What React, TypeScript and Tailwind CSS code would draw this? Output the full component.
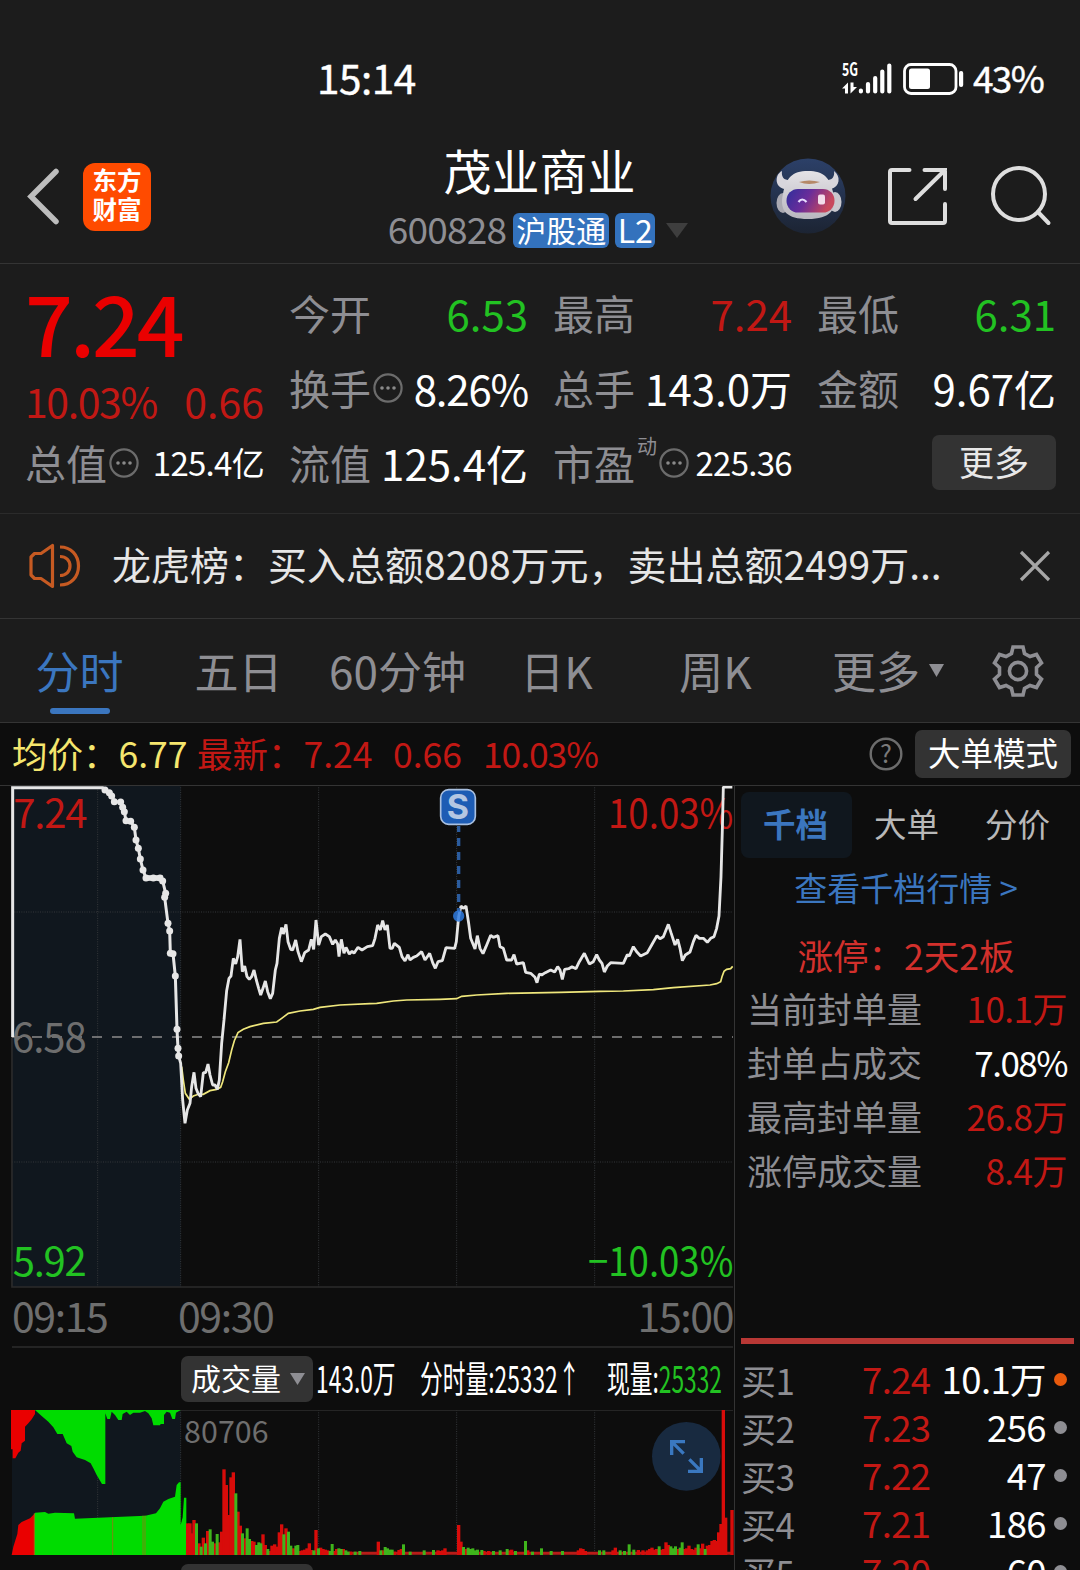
import { clsx } from 'clsx'
import type { ReactNode } from 'react'

type Tone = 'up' | 'down' | 'plain'

const toneClass: Record<Tone, string> = {
  up: 'text-[#c21814]',
  down: 'text-[#22c222]',
  plain: 'text-white',
}

const TABS = ['分时', '五日', '60分钟', '日K', '周K']

const LIMIT_ROWS: { label: string; value: string; tone: Tone }[] = [
  { label: '当前封单量', value: '10.1万', tone: 'up' },
  { label: '封单占成交', value: '7.08%', tone: 'plain' },
  { label: '最高封单量', value: '26.8万', tone: 'up' },
  { label: '涨停成交量', value: '8.4万', tone: 'up' },
]

const BIDS = [
  { label: '买1', price: '7.24', qty: '10.1万', hot: true },
  { label: '买2', price: '7.23', qty: '256' },
  { label: '买3', price: '7.22', qty: '47' },
  { label: '买4', price: '7.21', qty: '186' },
  { label: '买5', price: '7.20', qty: '60' },
]

// Chart units are thirds of a pixel
const AUCTION =
  '315,30 328,38 335,48 343,65 362,66 368,82 373,95 378,122 392,124 403,142 408,180 415,205 421,237 429,270 438,294 460,294 480,294 488,303 497,340 494,352 504,430 509,453 511,520 519,521 526,588 531,748 534,805 536,828'

const PRICE =
  '536,828 542,850 548,960 555,1030 562,990 570,970 575,920 582,877 588,925 594,940 602,950 610,878 617,878 624,852 630,885 638,915 645,915 652,928 658,900 665,790 672,720 680,632 687,595 693,588 700,535 707,552 713,530 720,478 727,575 734,558 741,590 748,598 755,590 762,570 769,600 776,625 782,645 789,625 796,603 803,635 811,656 818,640 826,570 831,550 838,475 845,443 850,462 858,433 864,485 872,508 878,510 887,480 894,515 904,545 914,518 926,510 934,478 941,508 948,420 956,495 964,470 976,462 988,470 998,493 1006,480 1013,492 1017,530 1024,478 1032,520 1038,502 1048,522 1056,514 1062,520 1074,502 1086,510 1102,500 1118,497 1125,475 1133,435 1141,450 1148,422 1155,450 1162,435 1170,505 1177,505 1183,490 1198,502 1206,530 1215,543 1224,524 1230,540 1240,532 1250,528 1265,515 1275,540 1289,520 1298,548 1306,565 1314,545 1327,542 1338,503 1364,505 1369,485 1376,410 1383,378 1390,385 1398,378 1406,430 1412,475 1425,507 1432,467 1440,505 1449,521 1458,500 1472,466 1480,472 1494,467 1500,500 1510,505 1520,540 1535,540 1542,524 1550,552 1570,548 1577,577 1592,580 1605,592 1611,608 1618,582 1625,585 1636,578 1652,570 1664,576 1673,560 1680,570 1687,598 1694,568 1706,566 1716,560 1728,566 1738,545 1753,520 1768,552 1780,545 1790,524 1798,540 1806,550 1813,576 1822,558 1832,548 1870,550 1882,524 1888,528 1900,500 1910,515 1922,528 1942,518 1955,495 1971,467 1980,476 1990,470 2005,433 2013,458 2025,495 2033,478 2040,505 2047,542 2056,525 2070,516 2080,485 2088,466 2098,475 2110,475 2122,487 2132,475 2142,470 2150,445 2157,408 2163,290 2167,150 2170,21 2197,21'

const AVERAGE =
  '545,860 550,900 556,940 568,958 580,948 595,943 610,943 630,932 650,928 662,922 668,905 676,875 686,848 695,810 703,782 714,758 730,748 750,740 790,730 830,726 845,715 865,700 900,693 940,688 960,682 1020,675 1110,671 1130,670 1180,663 1220,660 1320,658 1370,656 1385,649 1430,645 1520,640 1680,637 1800,634 1870,633 1960,629 2020,623 2130,615 2150,611 2162,605 2166,590 2172,574 2180,568 2192,566 2198,559'

// x, height; listed per colour
const RED_BARS =
  '563,95 570,95 575,65 582,105 597,35 610,52 623,72 645,35 659,38 665,70 672,257 679,210 686,120 693,233 700,248 714,130 721,88 735,50 755,42 762,40 789,62 796,30 809,12 816,28 824,32 831,25 838,68 845,92 858,80 880,20 900,12 907,14 914,16 921,20 928,35 934,15 948,75 962,22 969,18 976,16 983,14 1003,12 1010,18 1030,18 1051,10 1135,40 1149,14 1183,10 1197,15 1204,18 1314,14 1321,12 1328,14 1335,20 1376,90 1383,40 1397,18 1452,12 1466,12 1528,14 1535,16 1583,14 1735,14 1742,20 1749,18 1756,12 1839,14 1846,22 1915,15 1929,14 1942,14 1949,18 1956,22 1963,16 1970,18 1984,16 1991,18 1998,38 2005,30 2033,18 2053,18 2060,20 2067,28 2074,18 2081,16 2088,22 2101,20 2108,34 2122,28 2129,30 2136,42 2143,45 2150,42 2156,68 2163,93 2170,435 2177,112 2196,135'

const GREEN_BARS =
  '589,95 603,25 616,35 630,77 637,40 651,63 707,185 727,65 741,80 748,48 769,30 776,38 782,35 803,18 851,62 865,70 872,28 887,28 893,30 941,14 955,20 990,12 996,33 1016,20 1023,18 1037,14 1044,10 1065,10 1079,12 1142,14 1155,24 1162,20 1169,16 1176,16 1210,32 1230,10 1272,14 1300,15 1390,24 1404,22 1411,18 1418,20 1425,14 1432,16 1445,15 1480,12 1500,14 1521,18 1546,12 1576,42 1597,10 1624,20 1653,12 1687,12 1798,14 1811,14 1860,14 1873,12 1887,32 1901,16 1977,26 2012,26 2019,20 2026,26 2040,22 2046,38 2094,32 2115,18'

const parse = (s: string) => s.split(' ').map((p) => p.split(',').map(Number))

function Dots() {
  return (
    <svg width="30" height="30" viewBox="0 0 30 30" fill="none" className="ml-[2px] shrink-0">
      <circle cx="15" cy="15" r="13.6" stroke="#6c6c6c" strokeWidth="2.2" />
      <circle cx="9" cy="15" r="1.8" fill="#8a8a8a" />
      <circle cx="15" cy="15" r="1.8" fill="#8a8a8a" />
      <circle cx="21" cy="15" r="1.8" fill="#8a8a8a" />
    </svg>
  )
}

function StatusBar() {
  return (
    <div className="flex h-[138px] items-start pt-[53px] leading-[48px] text-white">
      <span className="ml-[317px] w-[525px] text-[40.5px] tracking-[-0.5px] [-webkit-text-stroke:0.4px_white]">15:14</span>
      <svg width="122" height="34" viewBox="0 0 122 34" className="mt-[9px] overflow-visible">
        <text x="0" y="14" fill="#fff" fontSize="18" fontWeight="700" textLength="16" lengthAdjust="spacingAndGlyphs">
          5G
        </text>
        <path d="M0 26.500L6 20.500V31.500H3V26.500Z M8.500 20.500H11.500V25L15 25L8.500 31.500Z" fill="#fff" />
        <path
          d="M18.900 28.500V29.500M26 22V29.500M33.200 16V29.500M40.300 9.500V29.500M47.300 3.500V29.500"
          stroke="#fff"
          strokeWidth="4.200"
          strokeLinecap="round"
        />
        <rect x="62.500" y="2.500" width="51.500" height="29" rx="6.500" fill="none" stroke="#fff" strokeWidth="2.800" />
        <rect x="67" y="6.500" width="21" height="20.500" rx="2.500" fill="#fff" />
        <rect x="117" y="9" width="4.200" height="16" rx="2" fill="#fff" />
      </svg>
      <span className="ml-[9px] text-[37px] tracking-[-1.7px] [-webkit-text-stroke:0.4px_white]">43%</span>
    </div>
  )
}

function Robot() {
  return (
    <svg width="76" height="76" viewBox="0 0 76 76">
      <defs>
        <linearGradient id="sky" x1="0" y1="0" x2="0" y2="1">
          <stop offset="0" stopColor="#2c4068" />
          <stop offset="1" stopColor="#1c2433" />
        </linearGradient>
        <linearGradient id="visor" x1="0" y1="0" x2="1" y2="0.300">
          <stop offset="0" stopColor="#2f2f9c" />
          <stop offset="0.500" stopColor="#6a2c9a" />
          <stop offset="1" stopColor="#c8485c" />
        </linearGradient>
        <linearGradient id="shell" x1="0" y1="0" x2="0" y2="1">
          <stop offset="0" stopColor="#e4e2e6" />
          <stop offset="1" stopColor="#b9b7bf" />
        </linearGradient>
      </defs>
      <circle cx="38" cy="38" r="37.500" fill="url(#sky)" />
      <path d="M12 13 C4 17 5 30 15 31 L22 22 C15 23 11 20 12 13Z" fill="#d8d6dc" />
      <path d="M64 13 C71 18 70 29 61 31 L54 22 C61 23 65 20 64 13Z" fill="#d8d6dc" />
      <ellipse cx="13" cy="45" rx="6.500" ry="10" fill="#aaa9b2" />
      <ellipse cx="65" cy="44" rx="6.500" ry="10" fill="#c9c8ce" />
      <path d="M38 13 C54 13 60 20 63 34 C68 52 60 61 38 61 C17 61 9 53 13 36 C16 20 22 13 38 13Z" fill="url(#shell)" />
      <path d="M29 24 Q39 21 50 24 Q39 28 29 24Z" fill="#b58868" />
      <rect x="16.500" y="31" width="48" height="23.500" rx="11.500" fill="url(#visor)" />
      <path d="M28.500 44 Q32 39 36.500 44" stroke="#e8dcff" strokeWidth="2.200" fill="none" />
      <rect x="48" y="36.500" width="7" height="10" rx="2" fill="#f3dcea" />
    </svg>
  )
}

function Header() {
  return (
    <header className="flex h-[126px] border-b border-[#343434]">
      <div className="flex w-[386px] items-start pt-[25px]">
        <svg width="36" height="66" viewBox="0 0 36 66" className="ml-[25px]" fill="none">
          <path d="M31 8.500 L6 33.500 L31 58.500" stroke="#bdbdbd" strokeWidth="5.500" strokeLinecap="round" />
        </svg>
        <div className="ml-[22px] h-[68px] w-[68px] rounded-[12px] bg-[#ff4b00] pt-[2px] text-center text-[24.5px] leading-[29px] font-bold text-white">
          东方
          <br />
          财富
        </div>
      </div>
      <div className="flex w-[304px] flex-col items-center">
        <h1 className="mt-[7px] ml-[3px] text-[48px] leading-[48px] text-white">茂业商业</h1>
        <div className="mt-[20px] flex h-[35px] items-center">
          <span className="pb-[5px] text-[37px] leading-[30px] tracking-[-0.8px] text-[#8e8e93]">600828</span>
          <span className="ml-[7px] flex h-[35px] w-[96px] items-center justify-center rounded-[6px] bg-[#3372bd] pb-[3px] text-[30px] leading-none text-white">
            沪股通
          </span>
          <span className="ml-[6px] flex h-[35px] w-[40px] items-center justify-center rounded-[6px] bg-[#3372bd] pb-[4px] text-[32px] leading-none text-white">
            L2
          </span>
          <svg width="22" height="15" viewBox="0 0 22 15" className="ml-[11px]">
            <path d="M0 0H22L11 15Z" fill="#3e3e3e" />
          </svg>
        </div>
      </div>
      <div className="ml-[80px] flex items-start pt-[20px]">
        <Robot />
        <svg width="62" height="62" viewBox="0 0 62 62" className="mt-[8px] ml-[40px]" fill="none" stroke="#dedede" strokeWidth="4" strokeLinecap="round">
          <path d="M23.500 4H6Q4 4 4 6V55Q4 57 6 57H57Q59 57 59 55V38" />
          <path d="M38.500 4H59V23M59 4L29.500 33" />
        </svg>
        <svg width="64" height="64" viewBox="0 0 64 64" className="mt-[6px] ml-[40px]" fill="none" stroke="#dedede" strokeWidth="4" strokeLinecap="round">
          <circle cx="31" cy="30" r="26" />
          <path d="M50 48L60.500 59" />
        </svg>
      </div>
    </header>
  )
}

interface StatProps {
  label: string
  value: string
  tone?: Tone
  small?: boolean
  mark?: ReactNode
}

function Stat({ label, value, tone = 'plain', small, mark }: StatProps) {
  return (
    <div className="flex h-[75px] items-center pb-[2px] leading-none whitespace-nowrap">
      <span className="text-[41px] text-[#8e8e93]">{label}</span>
      {mark}
      <span
        className={clsx(
          'ml-auto',
          small ? 'text-[33px] tracking-[-0.7px]' : 'text-[42px]',
          value.endsWith('%') && 'tracking-[-1.2px]',
          toneClass[tone],
        )}
      >
        {value}
      </span>
    </div>
  )
}

function Quote() {
  return (
    <section className="flex h-[250px] gap-[25px] border-b border-[#2b2b2b] pt-[12px] pl-[25px]">
      <div className="w-[239px]">
        <div className="h-[94px] pt-[3px] text-[84px] leading-[84px] font-medium tracking-[-3px] text-[#ea0000]">7.24</div>
        <div className="flex h-[56px] justify-between pt-[10px] text-[41px] leading-[41px] text-[#c21814]">
          <span className="tracking-[-1.4px]">10.03%</span>
          <span>0.66</span>
        </div>
        <Stat label="总值" value="125.4亿" small mark={<Dots />} />
      </div>
      <div className="w-[239px]">
        <Stat label="今开" value="6.53" tone="down" />
        <Stat label="换手" value="8.26%" mark={<Dots />} />
        <Stat label="流值" value="125.4亿" />
      </div>
      <div className="w-[239px]">
        <Stat label="最高" value="7.24" tone="up" />
        <Stat label="总手" value="143.0万" />
        <Stat
          label="市盈"
          value="225.36"
          small
          mark={
            <>
              <span className="mb-[34px] ml-[2px] text-[20px] text-[#8e8e93]">动</span>
              <Dots />
            </>
          }
        />
      </div>
      <div className="w-[239px]">
        <Stat label="最低" value="6.31" tone="down" />
        <Stat label="金额" value="9.67亿" />
        <div className="ml-auto mt-[9px] flex h-[55px] w-[124px] items-center justify-center rounded-[7px] bg-[#333333] pb-[5px] text-[35px] leading-none text-[#e8e8e8]">
          更多
        </div>
      </div>
    </section>
  )
}

function Notice() {
  return (
    <section className="flex h-[105px] items-center border-b border-[#343434] pl-[28px]">
      <svg width="54" height="46" viewBox="0 0 54 46" fill="none" stroke="#c65a22" strokeWidth="3.200">
        <path d="M24.500 2.500V43.500L13 35.500H6.500L3 32V14L6.500 10.500H13Z" strokeLinejoin="round" />
        <path d="M32 13.500C38 13.500 42 17.500 42 23S38 32.500 32 32.500M32 4C43 4 50.500 12 50.500 23S43 42 32 42" />
      </svg>
      <p className="ml-[30px] w-[890px] pb-[5px] text-[39px] leading-none whitespace-nowrap text-[#e6e6e6]">
        龙虎榜：买入总额8208万元，卖出总额2499万...
      </p>
      <svg width="32" height="32" viewBox="0 0 32 32" stroke="#a6a6a6" strokeWidth="3.200" className="ml-[17px]">
        <path d="M2 2L30 30M30 2L2 30" />
      </svg>
    </section>
  )
}

function TabBar() {
  return (
    <nav className="flex h-[104px] border-b border-[#343434] text-[44px] leading-[44px] text-[#8e8e93]">
      {TABS.map((tab, i) => (
        <div key={tab} className={clsx('flex w-[159px] flex-col items-center pt-[29px]', i === 0 && 'text-[#3b76bf]')}>
          {tab}
          {i === 0 && <span className="mt-[16px] h-[6px] w-[60px] rounded-full bg-[#3b76bf]" />}
        </div>
      ))}
      <div className="flex w-[149px] items-start justify-end pt-[29px]">
        更多
        <svg width="15" height="13" viewBox="0 0 15 13" className="mt-[16px] ml-[9px]">
          <path d="M0 0H15L7.500 13Z" fill="#8e8e93" />
        </svg>
      </div>
      <svg width="54" height="54" viewBox="-27 -27 54 54" className="mt-[25px] ml-[47px]" fill="none" stroke="#8e8e93" strokeWidth="3.600">
        <circle r="8.600" />
        <path d="M-5 -24H5L6.500 -17.500L12 -14.500L18.500 -16.500L23.500 -8L18.500 -3.500V3.500L23.500 8L18.500 16.500L12 14.500L6.500 17.500L5 24H-5L-6.500 17.500L-12 14.500L-18.500 16.500L-23.500 8L-18.500 3.500V-3.500L-23.500 -8L-18.500 -16.500L-12 -14.500L-6.500 -17.500Z" />
      </svg>
    </nav>
  )
}

function InfoBar() {
  return (
    <div className="flex h-[63px] items-center border-b border-[#343434] pr-[9px] pl-[12px] text-[35.5px] leading-none whitespace-nowrap text-[#c21814]">
      <div className="flex pb-[3px]">
        <span className="w-[185px] text-[#f5e66e]">均价：6.77</span>
        <span className="w-[196px]">最新：7.24</span>
        <span className="w-[90px]">0.66</span>
        <span className="tracking-[-1.1px]">10.03%</span>
      </div>
      <svg width="34" height="34" viewBox="0 0 34 34" className="ml-auto overflow-visible">
        <circle cx="17" cy="17" r="15.300" fill="none" stroke="#6c6c6c" strokeWidth="2.400" />
        <text x="17" y="26" fontSize="25" textAnchor="middle" fill="#7a7a7a">
          ?
        </text>
      </svg>
      <span className="ml-[12px] flex h-[48px] w-[156px] items-center justify-center rounded-[7px] bg-[#333333] pb-[4px] text-[32.5px] text-white">
        大单模式
      </span>
    </div>
  )
}

function PriceChart() {
  return (
    <svg width="734" height="502" viewBox="0 18 2202 1506" className="block" fill="none">
      <rect x="36" y="15" width="506" height="1506" fill="#10171e" />
      <g stroke="#34373a" strokeWidth="3" strokeDasharray="3 4">
        <path d="M293 15V1521M542 15V1521M956 15V1521M1370 15V1521M1784 15V1521" />
        <path d="M36 396H2199M36 1146H2199" />
      </g>
      <path d="M36 15V1521H2199" stroke="#2b2b2b" strokeWidth="5" />
      <path d="M36 771H2199" stroke="#8c8c8c" strokeWidth="5" strokeDasharray="30 30" />
      <g fontSize="120">
        <text x="40" y="144" fill="#c21814" textLength="222">7.24</text>
        <text x="36" y="816" fill="#6e6e6e" textLength="224">6.58</text>
        <text x="38" y="1489" fill="#22c222" textLength="222">5.92</text>
        <text x="1824" y="144" fill="#c21814" textLength="376" lengthAdjust="spacingAndGlyphs">10.03%</text>
        <text x="1764" y="1489" fill="#22c222" textLength="436" lengthAdjust="spacingAndGlyphs">−10.03%</text>
      </g>
      <polyline points={AVERAGE} stroke="#efe77c" strokeWidth="5" />
      <path d="M38 771V23H308L315 30" stroke="#e6e6e6" strokeWidth="9" />
      <polyline points={AUCTION} stroke="#e6e6e6" strokeWidth="9" />
      {parse(AUCTION).map(([x, y]) => (
        <circle key={`${x}-${y}`} cx={x} cy={y} r="10.500" fill="#e6e6e6" />
      ))}
      <path d="M438 294H488" stroke="#e6e6e6" strokeWidth="17" />
      <polyline points={PRICE} stroke="#e6e6e6" strokeWidth="8.500" strokeLinejoin="bevel" />
      <path d="M1376 138V395" stroke="#2b5c9e" strokeWidth="10" strokeDasharray="24 18" strokeDashoffset="6" />
      <circle cx="1376" cy="408" r="17" fill="#2f7be0" fillOpacity="0.850" />
      <rect x="1322" y="29" width="104" height="104" rx="24" fill="#1d5cb4" stroke="#a9c0e0" strokeWidth="5" />
      <text x="1374" y="118" fontSize="102" fontWeight="700" textAnchor="middle" fill="#b4c6e2" className="font-['Inter']">
        S
      </text>
    </svg>
  )
}

function VolumeChart() {
  return (
    <svg width="734" height="146" viewBox="0 540 2202 438" className="block" fill="none">
      <rect x="36" y="540" width="506" height="435" fill="#10171e" />
      <g stroke="#34373a" strokeWidth="3" strokeDasharray="3 4">
        <path d="M293 540V975M542 540V975M956 540V975M1370 540V975M1784 540V975" />
      </g>
      <path d="M36 541H2199" stroke="#2b2b2b" strokeWidth="3" />
      <path d="M33 540H105V552L95 568L85 580L75 590V632L65 640L62 662L55 668L46 685H38V658H33Z" fill="#ea0000" />
      <path
        d="M105 540H542L528 548L525 567H517L510 548L500 545L492 555V582H482L480 586H460L455 565L445 550L435 543L420 548H400L390 555L380 545L368 552L365 570H355L345 555L335 545L330 567H322L316 550V762H306L290 735L280 715L272 700L255 690L230 682L218 665L214 648L200 640L188 612H172L160 592L145 575L125 558Z"
        fill="#00dc00"
      />
      <path d="M35 975L40 950L52 912L55 885L65 876L90 865L105 850V975Z" fill="#ea0000" />
      <path
        d="M105 848L135 846L145 851L165 848L222 850L225 866L330 862L436 857L468 850L480 835L490 815L505 807L525 800L530 765L537 757H542V885L548 862L552 803H559V975H105Z"
        fill="#00dc00"
      />
      <path d="M103 850V975M338 862V975M429 857V975M435 857V975" stroke="#7a8a10" strokeWidth="3" />
      <path d="M559 970H2199" stroke="#b81c18" strokeWidth="9" />
      {parse(RED_BARS).map(([x, h]) => (
        <rect key={x} x={x - 5} y={975 - h} width="10" height={h} fill="#d80c0a" />
      ))}
      {parse(GREEN_BARS).map(([x, h]) => (
        <rect key={x} x={x - 4} y={975 - h} width="9" height={h} fill="#3fb41c" />
      ))}
      <text x="552" y="638" fontSize="91" fill="#6e6e6e" textLength="254">
        80706
      </text>
      <circle cx="2059" cy="679" r="103" fill="#182a40" />
      <g stroke="#3a78c0" strokeWidth="10">
        <path d="M2015 675V635H2055M2015 635L2051 671" />
        <path d="M2104 684V724H2064M2104 724L2068 688" />
      </g>
    </svg>
  )
}

function Condensed({ className, children }: { className: string; children: ReactNode }) {
  return (
    <div className={className}>
      <span className="inline-block origin-left scale-x-[0.615] whitespace-nowrap">{children}</span>
    </div>
  )
}

function ChartColumn() {
  return (
    <div className="w-[735px] shrink-0 border-r border-[#343434]">
      <PriceChart />
      <div className="ml-[12px] flex h-[60px] w-[721px] border-b-2 border-[#242424] pt-[6px] text-[41px] leading-[41px] tracking-[-1.4px] text-[#6e6e6e]">
        <span className="w-[166px]">09:15</span>
        <span>09:30</span>
        <span className="ml-auto">15:00</span>
      </div>
      <div className="flex h-[62px] items-center pl-[181px] text-[37px] leading-none text-white">
        <span className="mr-[3px] flex h-[46px] w-[132px] items-center rounded-[7px] bg-[#333333] pb-[4px] pl-[10px] text-[30px]">
          成交量
          <svg width="15" height="12" viewBox="0 0 15 12" className="mt-[3px] ml-[9px]">
            <path d="M0 0H15L7.500 12Z" fill="#8e8e93" />
          </svg>
        </span>
        <Condensed className="w-[104px] pb-[4px]">143.0万</Condensed>
        <Condensed className="w-[187px] pb-[4px]">分时量:25332↑</Condensed>
        <Condensed className="w-[118px] pb-[4px]">
          现量:<span className="text-[#22c222]">25332</span>
        </Condensed>
      </div>
      <VolumeChart />
      <div className="mt-[8px] ml-[181px] h-[46px] w-[132px] rounded-[7px] bg-[#333333]" />
    </div>
  )
}

function OrderBook() {
  return (
    <aside className="flex-1 pl-[6px] leading-none whitespace-nowrap">
      <div className="mt-[6px] flex h-[66px] text-[32.5px] text-[#b8b8b8]">
        <span className="flex w-[111px] items-center justify-center rounded-[8px] bg-[#10171e] pr-[2px] pb-[3px] font-bold text-[#3b76bf]">千档</span>
        <span className="flex w-[111px] items-center justify-center pr-[2px] pb-[3px]">大单</span>
        <span className="flex w-[111px] items-center justify-center pr-[2px] pb-[3px]">分价</span>
      </div>
      <div className="mt-[13px] w-[330px] text-center text-[33px] text-[#3b76bf]">查看千档行情 &gt;</div>
      <div className="mt-[33px] w-[330px] text-center text-[35.5px] text-[#d2302c]">涨停：2天2板</div>
      <div className="mt-[9px] pr-[13px] pl-[6px] text-[35px]">
        {LIMIT_ROWS.map((row) => (
          <div key={row.label} className="flex h-[54px] items-center justify-between pb-[2px]">
            <span className="text-[#8e8e93]">{row.label}</span>
            <span className={clsx(row.value.endsWith('%') ? 'tracking-[-1.5px]' : 'tracking-[-0.5px]', toneClass[row.tone])}>
              {row.value}
            </span>
          </div>
        ))}
      </div>
      <div className="mt-[140px] mb-[14px] h-[6px] w-[333px] bg-[#b83835]" />
      {BIDS.map((bid) => (
        <div key={bid.label} className="flex h-[48px] items-center text-[36.5px] tracking-[-0.6px]">
          <span className="w-[121px] pb-[4px] text-[35px] text-[#8e8e93]">{bid.label}</span>
          <span className="pb-[4px] text-[#c21814]">{bid.price}</span>
          <span className="ml-auto pb-[4px] text-white">{bid.qty}</span>
          <span className={clsx('mr-[13px] mb-[4px] ml-[8px] h-[13px] w-[13px] rounded-full', bid.hot ? 'bg-[#e85a0c]' : 'bg-[#8e8e93]')} />
        </div>
      ))}
    </aside>
  )
}

export default function App() {
  return (
    <div className="h-[1570px] w-[1080px] overflow-hidden bg-[#1c1c1c] font-['Noto_Sans_CJK_SC',sans-serif]">
      <StatusBar />
      <Header />
      <Quote />
      <Notice />
      <TabBar />
      <main className="bg-[#0d0d0d]">
        <InfoBar />
        <div className="flex h-[784px] overflow-hidden">
          <ChartColumn />
          <OrderBook />
        </div>
      </main>
    </div>
  )
}
